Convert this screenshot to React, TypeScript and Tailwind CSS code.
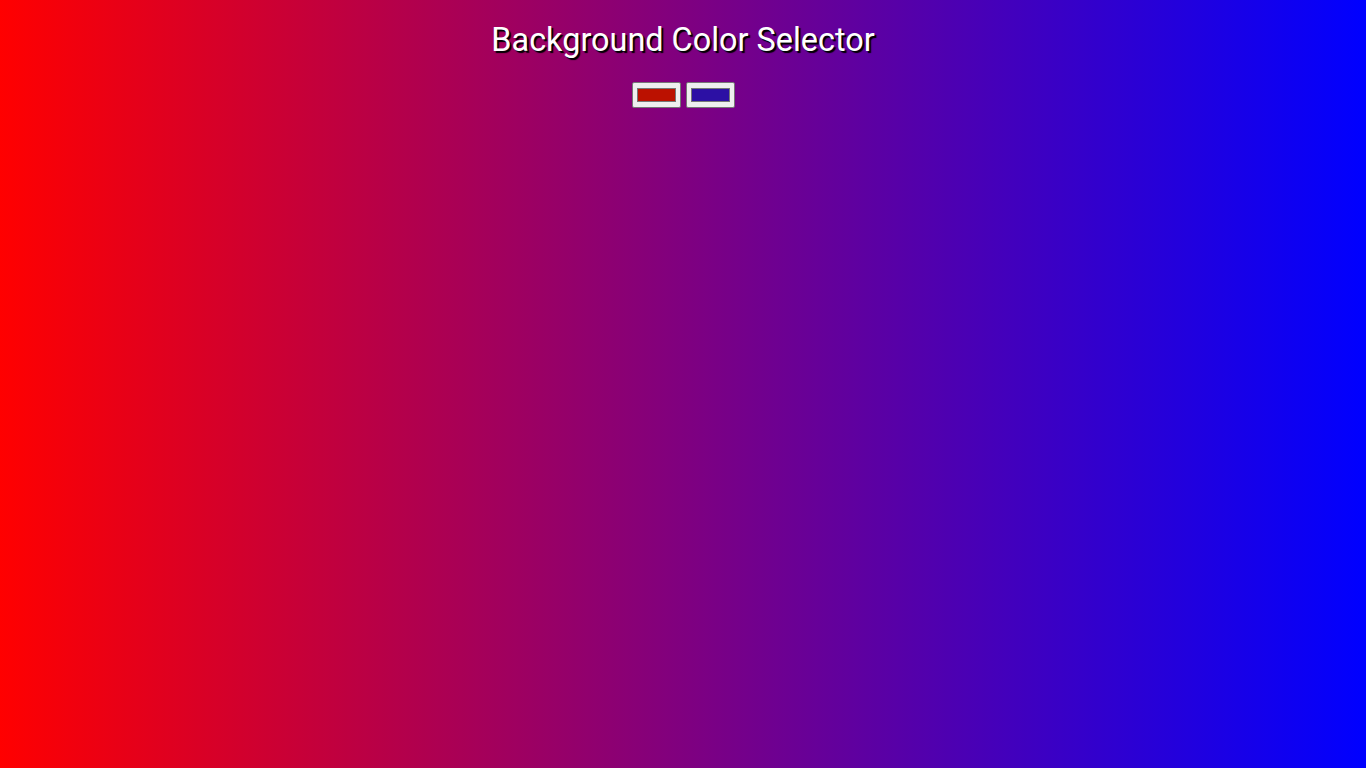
import React, { useState } from "react";

const App = () => {
  const [left, setLeft] = useState("#bb1100");
  const [right, setRight] = useState("#2c10a4");

  return (
    <div
      className="min-h-screen w-full bg-[linear-gradient(to_right,#ff0000,#0000ff)] text-center font-['Roboto',sans-serif]"
    >
      {/* Title */}
      <h1 className="pt-[21px] text-[32.4px] leading-[38px] font-normal text-white [text-shadow:2px_2px_1px_#000]">
        Background Color Selector
      </h1>

      {/* Color pickers */}
      <div className="mt-[23px] flex justify-center gap-[5px]">
        <input
          type="color"
          value={left}
          onChange={(e) => setLeft(e.target.value)}
          className="h-[26px] w-[49px] cursor-pointer rounded-[2px] border border-[#767676] bg-[#efefef] px-[2px] py-[1px]"
        />
        <input
          type="color"
          value={right}
          onChange={(e) => setRight(e.target.value)}
          className="h-[26px] w-[49px] cursor-pointer rounded-[2px] border border-[#767676] bg-[#efefef] px-[2px] py-[1px]"
        />
      </div>
    </div>
  );
};

export default App;
